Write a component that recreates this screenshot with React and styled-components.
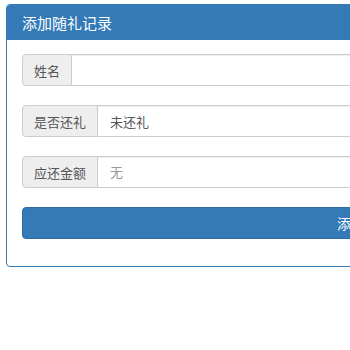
import React from 'react';
import styled, { createGlobalStyle } from 'styled-components';

const GlobalStyle = createGlobalStyle`
  html, body {
    margin: 0;
    overflow: hidden;
    background: #fff;
  }
  body {
    font-family: "Liberation Sans", "Noto Sans CJK SC", sans-serif;
  }
`;

const Page = styled.div`
  padding: 4px 0 0 6px;
`;

const Panel = styled.div`
  width: 688px;
  border: 1px solid #337ab7;
  border-radius: 4px;
  overflow: hidden;
`;

const Heading = styled.div`
  height: 35px;
  padding: 0 15px;
  display: flex;
  align-items: center;
  background: #337ab7;
  color: #fff;
  font-size: 15px;
`;

const Body = styled.form`
  padding: 14px 15px 27px;
  display: flex;
  flex-direction: column;
  gap: 19px;
`;

const InputGroup = styled.div`
  display: flex;
  height: 32px;
`;

const Addon = styled.span`
  display: flex;
  align-items: center;
  padding: 0 11px;
  background: #eee;
  border: 1px solid #ccc;
  border-radius: 4px 0 0 4px;
  color: #555;
  font-size: 13px;
`;

const Field = styled.input`
  flex: 1;
  min-width: 0;
  margin: 0;
  padding: 0 12px;
  border: 1px solid #ccc;
  border-left: 0;
  border-radius: 0 4px 4px 0;
  box-shadow: inset 0 1px 1px rgba(0, 0, 0, 0.075);
  color: #555;
  font-family: inherit;
  font-size: 13px;
  outline: none;

  &::placeholder {
    color: #999;
  }
`;

const SubmitButton = styled.button`
  height: 32px;
  margin: 0;
  background: #337ab7;
  border: 1px solid #2e6da4;
  border-radius: 4px;
  color: #fff;
  font-family: inherit;
  font-size: 14px;
`;

export default function App() {
  return (
    <Page>
      <GlobalStyle />
      <Panel>
        <Heading>添加随礼记录</Heading>
        <Body onSubmit={(e) => e.preventDefault()}>
          <InputGroup>
            <Addon>姓名</Addon>
            <Field type="text" />
          </InputGroup>
          <InputGroup>
            <Addon>是否还礼</Addon>
            <Field type="text" defaultValue="未还礼" readOnly />
          </InputGroup>
          <InputGroup>
            <Addon>应还金额</Addon>
            <Field type="text" placeholder="无" />
          </InputGroup>
          <SubmitButton type="submit">添加</SubmitButton>
        </Body>
      </Panel>
    </Page>
  );
}
